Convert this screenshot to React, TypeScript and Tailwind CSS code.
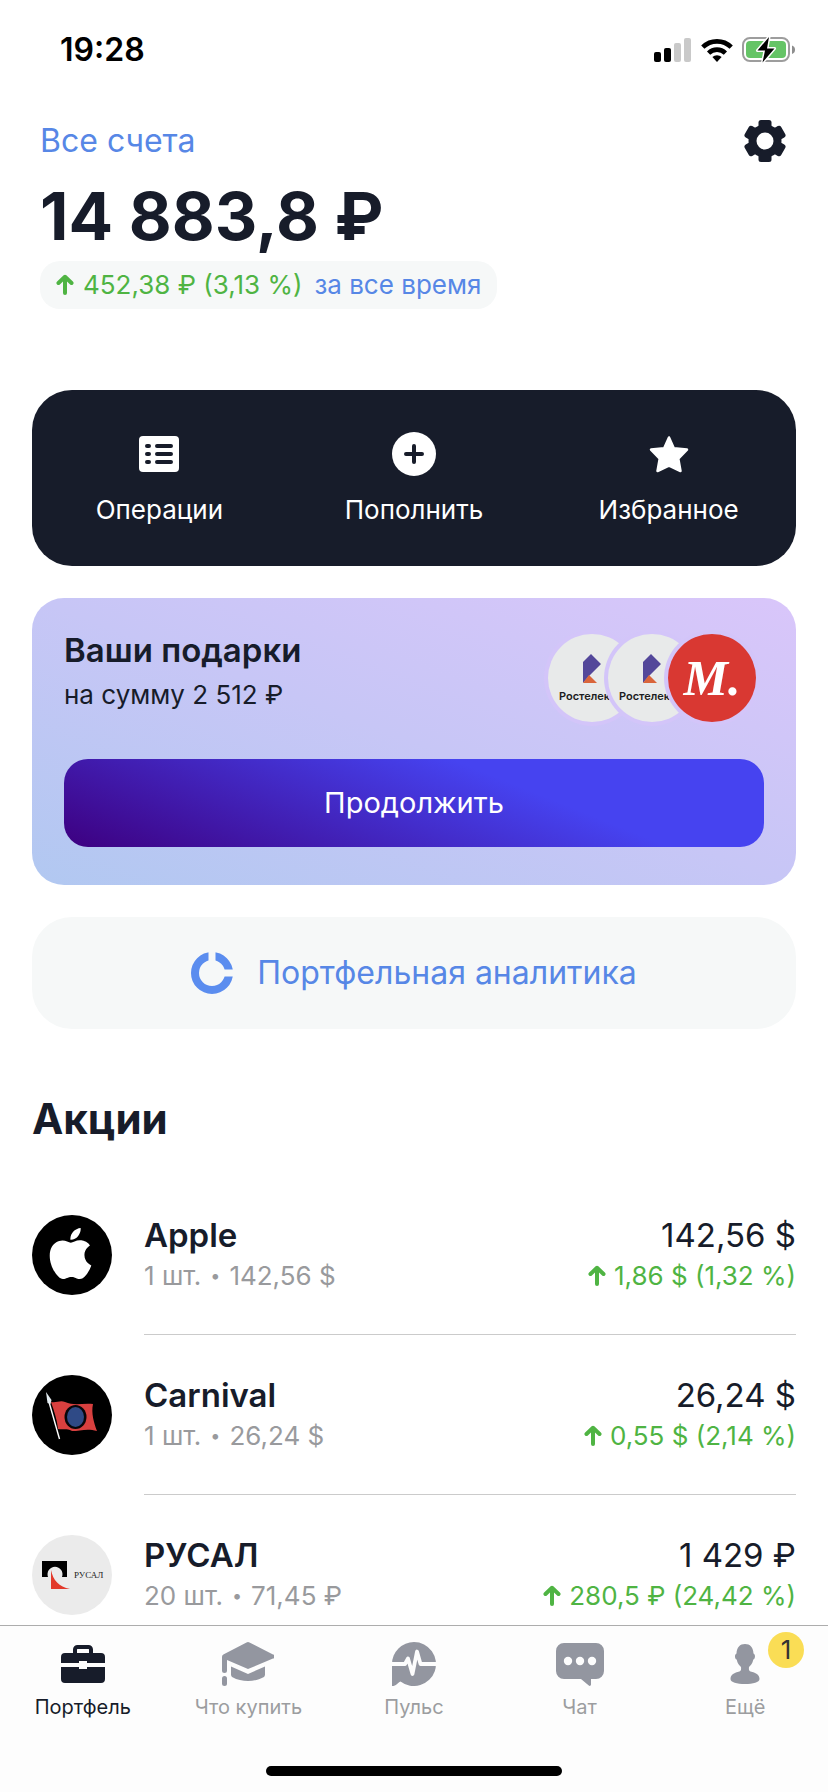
import React from 'react';
import { SiApple } from 'react-icons/si';

interface Stock {
    id: string;
    name: string;
    amount: string;
    price: string;
    total: string;
    change: string;
    logo: React.ReactNode;
}

interface Tab {
    label: string;
    icon: React.ReactNode;
    active?: boolean;
    badge?: number;
}

const SignalIcon = () => (
    <svg width="38" height="24" viewBox="0 0 38 24" aria-hidden="true">
        <rect x="0" y="14" width="7" height="10" rx="2" fill="#000" />
        <rect x="10" y="10" width="7" height="14" rx="2" fill="#000" />
        <rect x="20" y="5" width="7" height="19" rx="2" fill="#c9c9c9" />
        <rect x="30" y="0" width="7" height="24" rx="2" fill="#c9c9c9" />
    </svg>
);

const WifiIcon = () => (
    <svg width="32" height="24" viewBox="0 0 32 24" fill="none" stroke="#000" strokeWidth="4.6" aria-hidden="true">
        <path d="M1.8 9.2a20.2 20.2 0 0 1 28.4 0" />
        <path d="M7.6 15.1a12 12 0 0 1 16.8 0" />
        <path d="M16 24l-4.6-4.9a6.6 6.6 0 0 1 9.2 0z" fill="#000" stroke="none" />
    </svg>
);

const BatteryIcon = () => (
    <svg width="54" height="28" viewBox="0 0 54 28" aria-hidden="true">
        <rect x="1" y="2" width="46" height="23" rx="7" fill="none" stroke="#9d9d9d" strokeWidth="2" />
        <path d="M50 9.5a4.5 4.5 0 0 1 0 8.5z" fill="#8e8e8e" />
        <rect x="4" y="5" width="40" height="17" rx="4" fill="#65c466" />
        <path d="M27 1L15.5 14.5h7.5L20.5 26.5L32.5 12.5h-7.5z" fill="#000" stroke="#fff" strokeWidth="3" paintOrder="stroke" strokeLinejoin="round" />
    </svg>
);

const GearIcon = () => (
    <svg width="42" height="42" viewBox="0 0 42 42" fill="#171c2a" aria-hidden="true">
        <circle cx="21" cy="21" r="16.5" />
        <rect x="14.5" y="0" width="13" height="42" rx="2.5" />
        <rect x="14.5" y="0" width="13" height="42" rx="2.5" transform="rotate(60 21 21)" />
        <rect x="14.5" y="0" width="13" height="42" rx="2.5" transform="rotate(120 21 21)" />
        <circle cx="21" cy="21" r="8.5" fill="#fff" />
    </svg>
);

const ArrowUp = () => (
    <svg className="shrink-0" width="18" height="22" viewBox="0 0 18 22" fill="none" stroke="#4fb443" strokeWidth="4" strokeLinecap="round" aria-hidden="true">
        <path d="M9 19V4" />
        <path d="M2.5 9L9 2.8L15.5 9" strokeLinejoin="round" />
    </svg>
);

const ListIcon = () => (
    <svg width="40" height="36" viewBox="0 0 40 36" aria-hidden="true">
        <rect width="40" height="36" rx="4" fill="#fff" />
        <g stroke="#171c2a" strokeWidth="4" strokeLinecap="round">
            <path d="M18 10h14M18 18h14M18 26h14" />
            <path d="M8 10h2M8 18h2M8 26h2" />
        </g>
    </svg>
);

const PlusIcon = () => (
    <svg width="44" height="44" viewBox="0 0 44 44" aria-hidden="true">
        <circle cx="22" cy="22" r="22" fill="#fff" />
        <path d="M22 14v16M14 22h16" stroke="#171c2a" strokeWidth="4" strokeLinecap="round" />
    </svg>
);

const StarIcon = () => (
    <svg width="40" height="38" viewBox="0 0 40 38" fill="#fff" stroke="#fff" strokeWidth="2.5" strokeLinejoin="round" aria-hidden="true">
        <path d="M20 2.5L24.8 13.2L38 14.6L29.3 23.6L31.5 36L20 30.5L8.5 36L10.7 23.6L2 14.6L15.2 13.2z" />
    </svg>
);

const RingIcon = () => (
    <svg width="42" height="42" viewBox="0 0 42 42" fill="none" aria-hidden="true">
        <circle cx="21" cy="21" r="17" stroke="#5b8def" strokeWidth="8" />
        <path d="M21 0v14M28 21h14" stroke="#f6f8f8" strokeWidth="7" />
    </svg>
);

const BriefcaseIcon = () => (
    <svg width="44" height="38" viewBox="0 0 44 38" fill="#171c2a" aria-hidden="true">
        <path d="M14 10V4.5A2.5 2.5 0 0 1 16.5 2h11A2.5 2.5 0 0 1 30 4.5V10" fill="none" stroke="#171c2a" strokeWidth="4" />
        <path d="M4 8h36a4 4 0 0 1 4 4v6H26v-2h-8v2H0v-6a4 4 0 0 1 4-4z" />
        <path d="M0 22h18v2h8v-2h18v12a4 4 0 0 1-4 4H4a4 4 0 0 1-4-4z" />
    </svg>
);

const GraduationIcon = () => (
    <svg width="52" height="44" viewBox="0 0 52 44" fill="#9396a0" aria-hidden="true">
        <path d="M24.5.5a3 3 0 0 1 3 0L51 12.5a2 2 0 0 1 0 4L26 27L5 18v10.5a2.5 2.5 0 0 1-5 0V15a3 3 0 0 1 1.8-2.8z" />
        <rect x="0" y="34" width="5" height="10" rx="2.5" />
        <path d="M9 24.5L26 32l17-7.5v8.2a3 3 0 0 1-1.5 2.5C32.5 40.3 19.5 40.3 10.5 35.2A3 3 0 0 1 9 32.7z" />
    </svg>
);

const PulseIcon = () => (
    <svg width="44" height="44" viewBox="0 0 44 44" aria-hidden="true">
        <path d="M22 0a22 22 0 1 1-13.5 39.4C5.5 40.8 4.5 44 0 44V22A22 22 0 0 1 22 0z" fill="#9396a0" />
        <path d="M0 22h13l3-5.5L20.5 32L25 9.5L28.5 22H44" fill="none" stroke="#fdfdfd" strokeWidth="3.8" strokeLinejoin="round" />
    </svg>
);

const ChatIcon = () => (
    <svg width="48" height="44" viewBox="0 0 48 44" fill="#9396a0" aria-hidden="true">
        <path d="M8 1h32a8 8 0 0 1 8 8v20a8 8 0 0 1-8 8h-5v5.5a1.3 1.3 0 0 1-2.2 1L25 37H8a8 8 0 0 1-8-8V9a8 8 0 0 1 8-8z" />
        <g fill="#fdfdfd">
            <circle cx="12" cy="19" r="4.2" />
            <circle cx="24" cy="19" r="4.2" />
            <circle cx="36" cy="19" r="4.2" />
        </g>
    </svg>
);

const PersonIcon = () => (
    <svg width="30" height="40" viewBox="0 0 30 40" fill="#9396a0" aria-hidden="true">
        <path d="M15 0C20 0 23.3 3.3 23.5 9.5C25.6 10.2 25.5 14.8 23.3 15.6C22.6 19.5 20.5 21.8 19 23C18.7 26 19 27 21.5 27.8C27 29.2 29.5 31.5 29.5 35C29.5 38.5 23 40 15 40S.5 38.5.5 35C.5 31.5 3 29.2 8.5 27.8C11 27 11.3 26 11 23C9.5 21.8 7.4 19.5 6.7 15.6C4.5 14.8 4.4 10.2 6.5 9.5C6.7 3.3 10 0 15 0z" />
    </svg>
);

const CarnivalLogo = () => (
    <svg width="80" height="80" viewBox="0 0 80 80" aria-hidden="true">
        <path d="M19 27C25 28 28 25 33 27C42 31 50 28 61 29C59 38 62 48 65 56C55 53 48 56 40 56C34 53 32 55 26 54C25 44 22 36 19 27z" fill="#d8403f" />
        <ellipse cx="43.5" cy="42" rx="11" ry="12" fill="#08060a" />
        <ellipse cx="43.5" cy="42" rx="8.5" ry="10" fill="#2f4a86" />
        <path d="M17 27L27.5 64" stroke="#fff" strokeWidth="1.4" />
        <path d="M14 17L19.5 25L18.5 29L15.5 28z" fill="#e4edf2" />
    </svg>
);

const RusalLogo = () => (
    <div className="flex h-full items-center gap-1 pl-2">
        <svg className="shrink-0" width="30" height="30" viewBox="0 0 30 30" aria-hidden="true">
            <path d="M2 1h25v16H22A7.5 7.5 0 1 0 8 17H2z" fill="#000" />
            <path d="M11 10C13 20 19 27 30 29H11z" fill="#e23a2b" />
        </svg>
        <span className="font-['Liberation_Serif',serif] text-[9px] leading-none text-[#222]">РУСАЛ</span>
    </div>
);

const RostelecomGift = () => (
    <div className="-mr-7 flex size-[88px] flex-col items-center rounded-full bg-[#e8eaea] pt-[19px] ring-4 ring-[#d3c5f9]">
        <svg width="18" height="31" viewBox="0 0 18 31" aria-hidden="true">
            <path d="M0 30V9L8 1L18 11L6 23z" fill="#53479a" />
            <path d="M6 22L14 30H0z" fill="#d9653b" />
        </svg>
        <span className="mt-1 ml-[11px] self-start text-[11px] leading-4 font-semibold text-[#1c1d22]">Ростелек</span>
    </div>
);

const actions = [
    { label: 'Операции', icon: <ListIcon /> },
    { label: 'Пополнить', icon: <PlusIcon /> },
    { label: 'Избранное', icon: <StarIcon /> },
];

const stocks: Stock[] = [
    {
        id: 'AAPL',
        name: 'Apple',
        amount: '1 шт.',
        price: '142,56 $',
        total: '142,56 $',
        change: '1,86 $ (1,32 %)',
        logo: <div className="flex h-full items-center justify-center bg-black pr-1 pb-1 text-white"><SiApple size={51} /></div>,
    },
    {
        id: 'CCL',
        name: 'Carnival',
        amount: '1 шт.',
        price: '26,24 $',
        total: '26,24 $',
        change: '0,55 $ (2,14 %)',
        logo: <div className="h-full bg-black"><CarnivalLogo /></div>,
    },
    {
        id: 'RUAL',
        name: 'РУСАЛ',
        amount: '20 шт.',
        price: '71,45 ₽',
        total: '1 429 ₽',
        change: '280,5 ₽ (24,42 %)',
        logo: <RusalLogo />,
    },
];

const tabs: Tab[] = [
    { label: 'Портфель', icon: <BriefcaseIcon />, active: true },
    { label: 'Что купить', icon: <GraduationIcon /> },
    { label: 'Пульс', icon: <PulseIcon /> },
    { label: 'Чат', icon: <ChatIcon /> },
    { label: 'Ещё', icon: <PersonIcon />, badge: 1 },
];

const StatusBar: React.FC = () => (
    <div className="flex h-[100px] shrink-0 items-center justify-between pr-8 pl-[60px]">
        <span className="text-[32px] leading-10 font-semibold text-black">19:28</span>
        <div className="flex items-center gap-[9px]">
            <SignalIcon />
            <WifiIcon />
            <BatteryIcon />
        </div>
    </div>
);

const TabBar: React.FC = () => (
    <nav className="shrink-0 border-t border-[#adadad] bg-[#fdfdfd] pt-4 pb-4">
        <ul className="grid grid-cols-5">
            {tabs.map((tab) => (
                <li key={tab.label}>
                    <a href="#" className="flex flex-col items-center gap-[9px]">
                        <span className="relative flex h-11 w-full items-center justify-center">
                            {tab.icon}
                            {tab.badge && (
                                <span className="absolute -top-[10px] right-6 flex size-9 items-center justify-center rounded-full bg-[#fadd55] text-[26px] leading-none text-[#333]">
                                    {tab.badge}
                                </span>
                            )}
                        </span>
                        <span className={tab.active ? 'text-[20px] leading-6 text-[#171c2a]' : 'text-[20px] leading-6 text-[#9c9da0]'}>
                            {tab.label}
                        </span>
                    </a>
                </li>
            ))}
        </ul>
        <div className="mx-auto mt-[47px] h-[10px] w-[296px] rounded-full bg-black" />
    </nav>
);

const App: React.FC = () => {
    return (
        <div className="flex h-screen flex-col bg-white font-['Inter',sans-serif] text-[#171c2a]">
            <StatusBar />

            <main className="min-h-0 flex-1 overflow-y-auto px-8 pt-5 [scrollbar-width:none]">
                <header className="px-2">
                    <div className="flex items-center justify-between">
                        <a href="#" className="text-[32px] leading-10 text-[#5787e6]">Все счета</a>
                        <button type="button" aria-label="Настройки" className="mr-0.5">
                            <GearIcon />
                        </button>
                    </div>
                    <h1 className="mt-[14px] text-[66px] leading-[80px] font-bold">14 883,8 ₽</h1>
                    <button type="button" className="mt-[5px] flex h-12 items-center rounded-[20px] bg-[#f6f8f8] px-4 text-[26px] leading-8">
                        <ArrowUp />
                        <span className="ml-[9px] text-[#4fb443]">452,38 ₽ (3,13 %)</span>
                        <span className="ml-3 text-[#5787e6]">за все время</span>
                    </button>
                </header>

                <section className="mt-[81px] flex flex-col gap-8">
                    <div className="grid h-44 grid-cols-3 rounded-[40px] bg-[#171c2a] pt-0.5">
                        {actions.map((action) => (
                            <button key={action.label} type="button" className="flex flex-col items-center justify-center gap-[18px] text-white">
                                <span className="flex h-11 items-center">{action.icon}</span>
                                <span className="text-[26px] leading-8">{action.label}</span>
                            </button>
                        ))}
                    </div>

                    <div className="rounded-[32px] bg-linear-to-tr from-[#b1c8f1] via-[#c7c6f6] to-[#d9c6fa] px-8 pt-9 pb-[38px]">
                        <div className="flex items-start justify-between">
                            <div>
                                <h2 className="text-[33px] leading-8 font-semibold">Ваши подарки</h2>
                                <p className="mt-[13px] text-[26px] leading-8">на сумму 2 512 ₽</p>
                            </div>
                            <div className="flex pr-2">
                                <RostelecomGift />
                                <RostelecomGift />
                                <div className="flex size-[88px] items-center justify-center rounded-full bg-[#d93832] font-['Liberation_Serif',serif] text-[50px] leading-none font-bold text-white italic ring-4 ring-[#d3c5f9]">
                                    М.
                                </div>
                            </div>
                        </div>
                        <button type="button" className="mt-[37px] h-[88px] w-full rounded-3xl bg-[linear-gradient(22deg,#3d0080,#4643f0_66%)] text-[29px] leading-9 text-white">
                            Продолжить
                        </button>
                    </div>

                    <button type="button" className="flex h-28 items-center justify-center gap-6 rounded-[40px] bg-[#f6f8f8] text-[32px] leading-10 text-[#5787e6]">
                        <RingIcon />
                        Портфельная аналитика
                    </button>
                </section>

                <section>
                    <h2 className="mt-[62px] text-[42px] leading-[56px] font-bold">Акции</h2>
                    <ul className="mt-7">
                        {stocks.map((stock) => (
                            <li key={stock.id} className="group flex gap-8">
                                <div className="mt-10 size-20 shrink-0 overflow-hidden rounded-full bg-[#ebebeb]">{stock.logo}</div>
                                <div className="flex flex-1 justify-between border-b border-[#cbcbcb] pt-10 pb-[37px] group-last:border-b-0">
                                    <div>
                                        <h3 className="text-[33px] leading-10 font-semibold">{stock.name}</h3>
                                        <p className="flex items-center text-[26px] leading-[42px] text-[#999a9d]">
                                            {stock.amount}
                                            <span className="mx-[9px] text-[18px]">•</span>
                                            {stock.price}
                                        </p>
                                    </div>
                                    <div className="flex flex-col items-end">
                                        <span className="text-[33px] leading-10">{stock.total}</span>
                                        <span className="flex items-center gap-2 text-[26px] leading-[42px] text-[#4fb443]">
                                            <ArrowUp />
                                            {stock.change}
                                        </span>
                                    </div>
                                </div>
                            </li>
                        ))}
                    </ul>
                </section>
            </main>

            <TabBar />
        </div>
    );
};

export default App;
